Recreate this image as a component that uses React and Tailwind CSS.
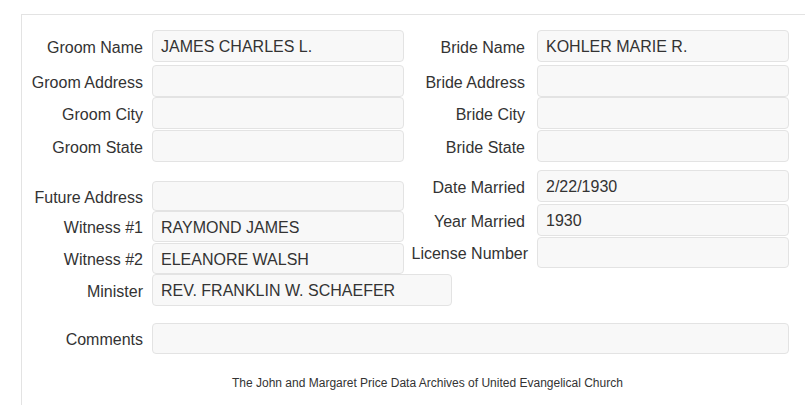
import React from "react";

const font = { fontFamily: '"Liberation Sans", Arial, sans-serif' };

function Box({ value, w = "w-[252px]", h = "h-[32px]" }) {
  return (
    <div
      className={`${w} ${h} shrink-0 rounded-[4px] border border-[#e3e3e3] bg-[#f8f8f8] px-2 pt-[2px] flex items-center text-[16px] text-[#333]`}
    >
      {value}
    </div>
  );
}

function Field({ label, value, gap = "ml-[9px]", w, h, className = "", labelClass = "" }) {
  return (
    <div className={`flex items-center ${className}`}>
      <div className="w-[121px] shrink-0 pt-[3px] text-right text-[16px] text-[#333] whitespace-nowrap">
        <span className={`inline-block ${labelClass}`}>{label}</span>
      </div>
      <div className={gap}>
        <Box value={value} w={w} h={h} />
      </div>
    </div>
  );
}

export default function App() {
  return (
    <div className="bg-white w-[805px] h-[405px] overflow-hidden pt-[14px] pl-[21px]" style={font}>
      <div className="border-t border-l border-[#e3e3e3] h-[400px]">
        {/* groom / bride */}
        <div className="flex pt-[15px]">
          <div className="flex flex-col">
            <Field label="Groom Name" value="JAMES CHARLES L." />
            <Field label="Groom Address" value="" className="mt-[3px]" />
            <Field label="Groom City" value="" />
            <Field label="Groom State" value="" className="mt-[1px]" />
          </div>
          <div className="flex flex-col">
            <Field label="Bride Name" value="KOHLER MARIE R." gap="ml-[12px]" />
            <Field label="Bride Address" value="" gap="ml-[12px]" className="mt-[3px]" />
            <Field label="Bride City" value="" gap="ml-[12px]" />
            <Field label="Bride State" value="" gap="ml-[12px]" className="mt-[1px]" />
          </div>
        </div>

        {/* future address / witnesses / marriage */}
        <div className="flex items-start">
          <div className="flex flex-col pt-[19px]">
            <Field label="Future Address" value="" h="h-[30px]" />
            <Field label="Witness #1" value="RAYMOND JAMES" h="h-[31px]" />
            <Field label="Witness #2" value="ELEANORE WALSH" h="h-[31px]" className="mt-[1px]" />
            <Field label="Minister" value="REV. FRANKLIN W. SCHAEFER" w="w-[300px]" />
          </div>
          <div className="flex flex-col pt-[8px] -ml-[48px]">
            <Field label="Date Married" value="2/22/1930" gap="ml-[12px]" />
            <Field label="Year Married" value="1930" gap="ml-[12px]" className="mt-[2px]" />
            <Field
              label="License Number"
              value=""
              gap="ml-[12px]"
              h="h-[31px]"
              className="mt-[1px]"
              labelClass="translate-x-[3px]"
            />
          </div>
        </div>

        {/* comments */}
        <Field label="Comments" value="" w="w-[637px]" h="h-[31px]" className="mt-[17px]" />

        <div className="mt-[20px] pl-[210px] text-[12px] text-[#333]">
          The John and Margaret Price Data Archives of United Evangelical Church
        </div>
      </div>
    </div>
  );
}
